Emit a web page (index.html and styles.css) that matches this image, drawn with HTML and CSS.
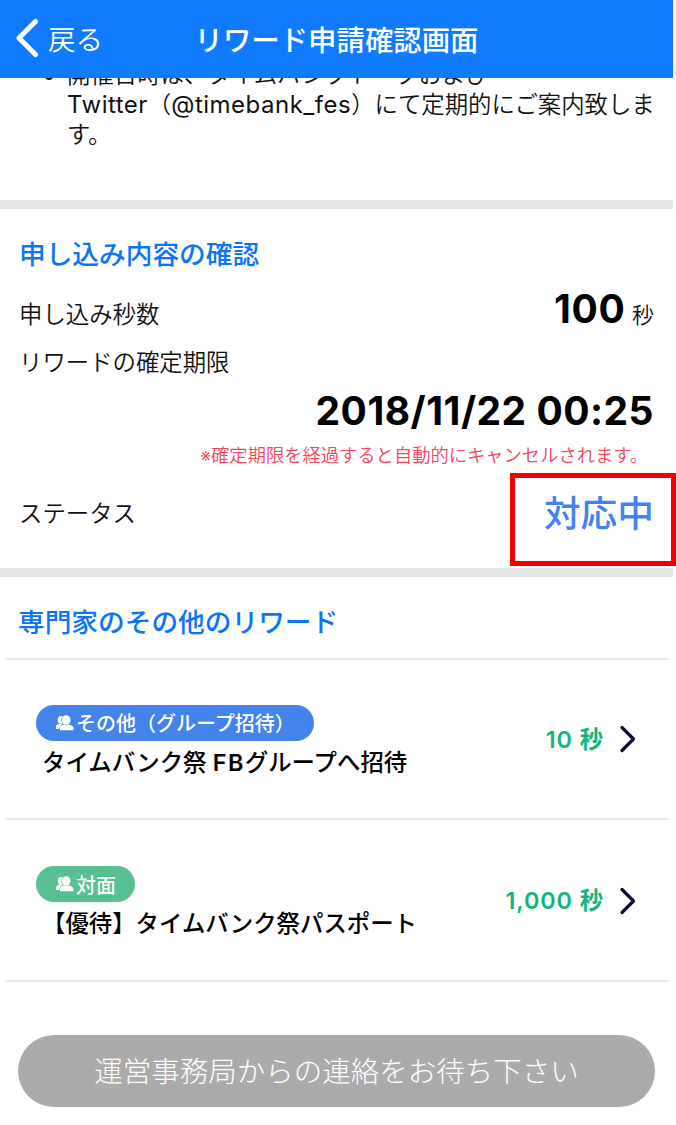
FILE: index.html
```
<!DOCTYPE html>
<html lang="ja">

<head>
  <meta charset="UTF-8">
  <meta name="viewport" content="width=device-width, initial-scale=1.0">
  <title>リワード申請確認画面</title>
  <link rel="stylesheet" href="styles.css">
</head>

<body>
  <div class="screen">
    <header class="navbar">
      <a class="back">
        <svg class="back-icon" width="24" height="40" viewBox="0 0 24 40">
          <path d="M20.5 3.5 L4 20 L20.5 36.5" />
        </svg>
        <span>戻る</span>
      </a>
      <h1>リワード申請確認画面</h1>
    </header>

    <section class="notes">
      <ul>
        <li>開催日時は、タイムバンクトークおよび<br><span class="latin">Twitter</span>（<span class="latin">@timebank_fes</span>）にて定期的にご案内致します。</li>
      </ul>
    </section>

    <section class="summary">
      <h2>申し込み内容の確認</h2>
      <div class="row row-seconds">
        <span>申し込み秒数</span>
        <span><strong class="amount">100</strong> <span class="unit">秒</span></span>
      </div>
      <div class="row row-limit">リワードの確定期限</div>
      <div class="limit-date">2018/11/22 00:25</div>
      <p class="warning">※確定期限を経過すると自動的にキャンセルされます。</p>
      <div class="row row-status">
        <span>ステータス</span>
        <strong class="status">対応中</strong>
        <div class="highlight"></div>
      </div>
    </section>

    <section class="others">
      <h2>専門家のその他のリワード</h2>
      <div class="reward">
        <div class="reward-info">
          <span class="tag tag-blue">
            <svg class="people" width="20" height="16" viewBox="0 0 20 16">
              <ellipse cx="4.800" cy="5" rx="3" ry="4" />
              <path d="M0 14 V11.500 Q0 9.500 3 9 H6 L3 14 Z" />
              <g class="front">
                <path d="M3.800 15.200 V13 Q3.800 10.500 8 9.500 V7 H12.500 V9.500 Q17.500 10.500 17.500 13 V15.200 Z" />
                <ellipse cx="10.200" cy="5" rx="4.300" ry="4.800" />
              </g>
            </svg>その他（グループ招待）</span>
          <p class="reward-name">タイムバンク祭 <span class="fb">FB</span>グループへ招待</p>
        </div>
        <div class="price">10 秒</div>
        <svg class="arrow" width="18" height="28" viewBox="0 0 18 28">
          <path d="M3 2.500 L14.500 14 L3 25.500" />
        </svg>
      </div>
      <div class="reward">
        <div class="reward-info">
          <span class="tag tag-green">
            <svg class="people" width="20" height="16" viewBox="0 0 20 16">
              <ellipse cx="4.800" cy="5" rx="3" ry="4" />
              <path d="M0 14 V11.500 Q0 9.500 3 9 H6 L3 14 Z" />
              <g class="front">
                <path d="M3.800 15.200 V13 Q3.800 10.500 8 9.500 V7 H12.500 V9.500 Q17.500 10.500 17.500 13 V15.200 Z" />
                <ellipse cx="10.200" cy="5" rx="4.300" ry="4.800" />
              </g>
            </svg>対面</span>
          <p class="reward-name">【優待】タイムバンク祭パスポート</p>
        </div>
        <div class="price">1,000 秒</div>
        <svg class="arrow" width="18" height="28" viewBox="0 0 18 28">
          <path d="M3 2.500 L14.500 14 L3 25.500" />
        </svg>
      </div>
    </section>

    <button class="wait-button" disabled>運営事務局からの連絡をお待ち下さい</button>
  </div>
</body>

</html>
```

FILE: styles.css
```
* {
  box-sizing: border-box;
}

body {
  margin: 0;
  background: #fff;
  color: #111;
  font-family: Inter, "Noto Sans CJK JP", sans-serif;
  font-size: 23.4px;
  font-weight: 350;
  text-spacing-trim: space-all;
}

h1, h2, p, ul {
  margin: 0;
  padding: 0;
}

.screen {
  width: 673px;
  height: 1125px;
}

.navbar {
  position: relative;
  z-index: 1;
  display: grid;
  grid-template-columns: 180px 1fr 180px;
  align-items: center;
  height: 78px;
  padding-bottom: 2px;
  background: #107bff;
  color: #fff;
}

.back {
  display: flex;
  align-items: center;
  gap: 9px;
  padding-left: 15px;
  font-size: 27.5px;
  font-weight: 350;
}

.back-icon path {
  fill: none;
  stroke: #fff;
  stroke-width: 5;
  stroke-linecap: round;
  stroke-linejoin: round;
}

.navbar h1 {
  text-align: center;
  font-size: 28.4px;
  font-weight: 500;
  white-space: nowrap;
}

.notes {
  height: 149px;
  margin-top: -18px;
  padding: 0 10px 0 67px;
  border-bottom: 9px solid #e6e6e6;
  line-height: 30px;
}

.latin {
  font-size: 24px;
  font-weight: 400;
  letter-spacing: 0.5px;
}

.summary {
  height: 368px;
  padding: 28px 19px 0;
  border-bottom: 9px solid #e6e6e6;
}

h2 {
  color: #0a74fa;
  font-size: 26.7px;
  font-weight: 500;
  line-height: 34px;
}

.row {
  display: flex;
  justify-content: space-between;
  align-items: baseline;
}

.row-seconds {
  height: 48px;
  margin-top: 14px;
  line-height: 48px;
}

.amount {
  color: #000;
  font-size: 39px;
  font-weight: 700;
  letter-spacing: 0.7px;
}

.unit {
  font-size: 22px;
  font-weight: 350;
}

.row-limit {
  margin-top: 13px;
  line-height: 34px;
}

.limit-date {
  color: #000;
  text-align: right;
  font-size: 39px;
  font-weight: 700;
  letter-spacing: 0.5px;
  line-height: 48px;
  margin-top: 7px;
}

.warning {
  padding-right: 6px;
  color: #f5445c;
  text-align: right;
  font-size: 18.3px;
  line-height: 26px;
  margin-top: 7px;
  white-space: nowrap;
}

.row-status {
  position: relative;
  align-items: center;
  margin-top: 18px;
  line-height: 56px;
}

.status {
  color: #4383ed;
  font-size: 36.7px;
  font-weight: 500;
}

.highlight {
  position: absolute;
  top: -13px;
  right: -22px;
  width: 166px;
  height: 93px;
  border: 5px solid #f20000;
}

.others {
  padding: 28px 5px 0;
}

.others h2 {
  height: 53px;
  padding-left: 13px;
}

.reward {
  display: flex;
  align-items: center;
  height: 160px;
  padding: 0 31px;
  border-top: 2px solid #e8e8e8;
}

.reward:last-child {
  height: 164px;
  padding-top: 1px;
  border-bottom: 2px solid #e8e8e8;
}

.reward-info {
  flex: 1;
  padding-top: 10px;
}

.tag {
  display: inline-flex;
  align-items: center;
  height: 36px;
  padding: 0 19px 0 20px;
  border-radius: 18px;
  color: #fff;
  font-family: "Noto Sans CJK JP", sans-serif;
  font-size: 20px;
  font-weight: 500;
  vertical-align: top;
}

.tag-blue {
  background: #4383ea;
}

.tag-green {
  background: #59c093;
}

.people {
  fill: #fff;
}

.tag-blue .front {
  stroke: #4383ea;
}

.tag-green .front {
  stroke: #59c093;
}

/* outline goes behind the fill so it only separates the two figures */
.people .front {
  stroke-width: 1;
  paint-order: stroke;
}

.reward-name {
  padding-left: 6px;
  color: #000;
  font-weight: 500;
  line-height: 43px;
  white-space: nowrap;
}

.fb {
  font-weight: 600;
  letter-spacing: 1.5px;
}

.price {
  padding-bottom: 3px;
  color: #12b57e;
  font-size: 23.4px;
  font-weight: 600;
  letter-spacing: 0.9px;
}

.arrow {
  margin-left: 15px;
}

.arrow path {
  fill: none;
  stroke: #0d0b35;
  stroke-width: 3.2;
  stroke-linecap: round;
  stroke-linejoin: round;
}

.wait-button {
  display: block;
  width: 637px;
  height: 72px;
  margin: 53px 18px 0;
  padding: 0 0 3px;
  border: 0;
  border-radius: 36px;
  background: #ababab;
  color: #fff;
  font-family: inherit;
  font-size: 28.5px;
  font-weight: 300;
}
```
